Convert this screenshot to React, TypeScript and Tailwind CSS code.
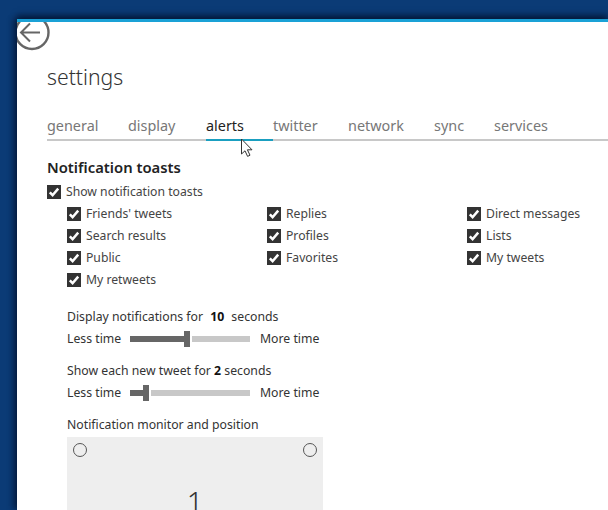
const font = { fontFamily: '"Noto Sans", sans-serif' };

function Check({ label }: { label: string }) {
  return (
    <div className="flex h-[22px] items-center">
      <svg width="14" height="14" viewBox="0 0 14 14" className="shrink-0">
        <rect width="14" height="14" fill="#333333" />
        <path d="M2.8 7.4 5.6 10.2 11.2 3.6" fill="none" stroke="#ffffff" strokeWidth="2.5" />
      </svg>
      <span className="ml-[5px] whitespace-nowrap text-[12.2px] text-[#444444]">{label}</span>
    </div>
  );
}

function Slider({ pct }: { pct: number }) {
  return (
    <div className="flex h-[20px] items-center text-[12.25px] text-[#333333]">
      <span className="w-[63px] whitespace-nowrap">Less time</span>
      <div className="relative h-[6px] w-[120px] bg-[#c8c8c8]">
        <div className="h-full bg-[#666666]" style={{ width: pct }} />
        <div className="absolute top-[-5px] box-content h-[16px] w-[6px] border-r-2 border-white bg-[#666666]" style={{ left: pct - 3 }} />
      </div>
      <span className="ml-[10px] whitespace-nowrap">More time</span>
    </div>
  );
}

const tabs = [
  ["general", "w-[81px]"],
  ["display", "w-[78px]"],
  ["alerts", "w-[67px]"],
  ["twitter", "w-[75px]"],
  ["network", "w-[86px]"],
  ["sync", "w-[60px]"],
  ["services", "w-[60px]"],
];

const rows = [
  ["Friends' tweets", "Replies", "Direct messages"],
  ["Search results", "Profiles", "Lists"],
  ["Public", "Favorites", "My tweets"],
  ["My retweets"],
];

export default function App() {
  return (
    <div className="h-[510px] w-[608px] overflow-hidden bg-[#0b3b76] pt-[19px] pl-[17px]" style={font}>
      <div className="relative h-[491px] w-[591px] border-t-[3px] border-[#1aa1d6] bg-white shadow-[0_-4px_6px_rgba(0,10,30,0.55),-4px_0_6px_rgba(0,10,30,0.45)]">
        <div className="absolute top-0 left-0 h-[40px] w-[40px] overflow-hidden">
          <svg width="40" height="40" viewBox="0 0 40 40">
            <circle cx="15" cy="10.5" r="16.5" fill="none" stroke="#666666" strokeWidth="2.4" />
            <path d="M4 10.5H23M13 1.5 4 10.5 13 19.5" fill="none" stroke="#666666" strokeWidth="2" />
          </svg>
        </div>
        <div className="pt-[39px] pl-[30px]">
          <h1 className="text-[21.2px] leading-[32px] font-light text-[#333333]">settings</h1>
          <div className="mt-[20px] flex h-[28px] border-b-2 border-[#c8c8c8]">
            {tabs.map(([t, w]) => (
              <div
                key={t}
                className={`${w} -mb-[2px] h-[28px] text-[14.4px] leading-[26px] whitespace-nowrap ${t === "alerts" ? "border-b-2 border-[#1a9fc0] text-[#222222]" : "text-[#777777]"}`}
              >
                {t}
              </div>
            ))}
          </div>
          <h2 className="mt-[15px] text-[14.8px] leading-[22px] font-semibold text-[#222222]">Notification toasts</h2>
          <div className="mt-[3px]"><Check label="Show notification toasts" /></div>
          <div className="ml-[20px] grid w-[600px] grid-cols-[200px_200px_200px]">
            {rows.flat().map((l) => <Check key={l} label={l} />)}
          </div>
          <div className="mt-[16px] ml-[20px]">
            <div className="h-[22px] text-[12.25px] leading-[20px] text-[#333333]">Display notifications for <b className="mx-[4px] text-[#111111]">10</b> seconds</div>
            <Slider pct={57} />
            <div className="mt-[12px] h-[22px] text-[12.25px] leading-[20px] text-[#333333]">Show each new tweet for <b className="text-[#111111]">2</b> seconds</div>
            <Slider pct={16} />
            <div className="mt-[12px] h-[22px] text-[12.25px] leading-[20px] text-[#333333]">Notification monitor and position</div>
            <div className="relative h-[80px] w-[256px] overflow-hidden bg-[#eeeeee] text-center">
              <span className="absolute top-[6px] left-[6px] h-[14px] w-[14px] rounded-full border border-[#555555]" />
              <span className="absolute top-[6px] right-[6px] h-[14px] w-[14px] rounded-full border border-[#555555]" />
              <div className="pt-[47px] text-[29px] leading-[36px] font-light text-[#333333]">1</div>
            </div>
          </div>
        </div>
        <svg width="14" height="20" viewBox="0 0 14 20" className="absolute top-[116px] left-[223px]">
          <path d="M1.5 1V16L5 12.8 7.6 18.4 10 17.2 7.4 11.8H12Z" fill="#ffffff" stroke="#333333" strokeWidth="1" />
        </svg>
      </div>
    </div>
  );
}
